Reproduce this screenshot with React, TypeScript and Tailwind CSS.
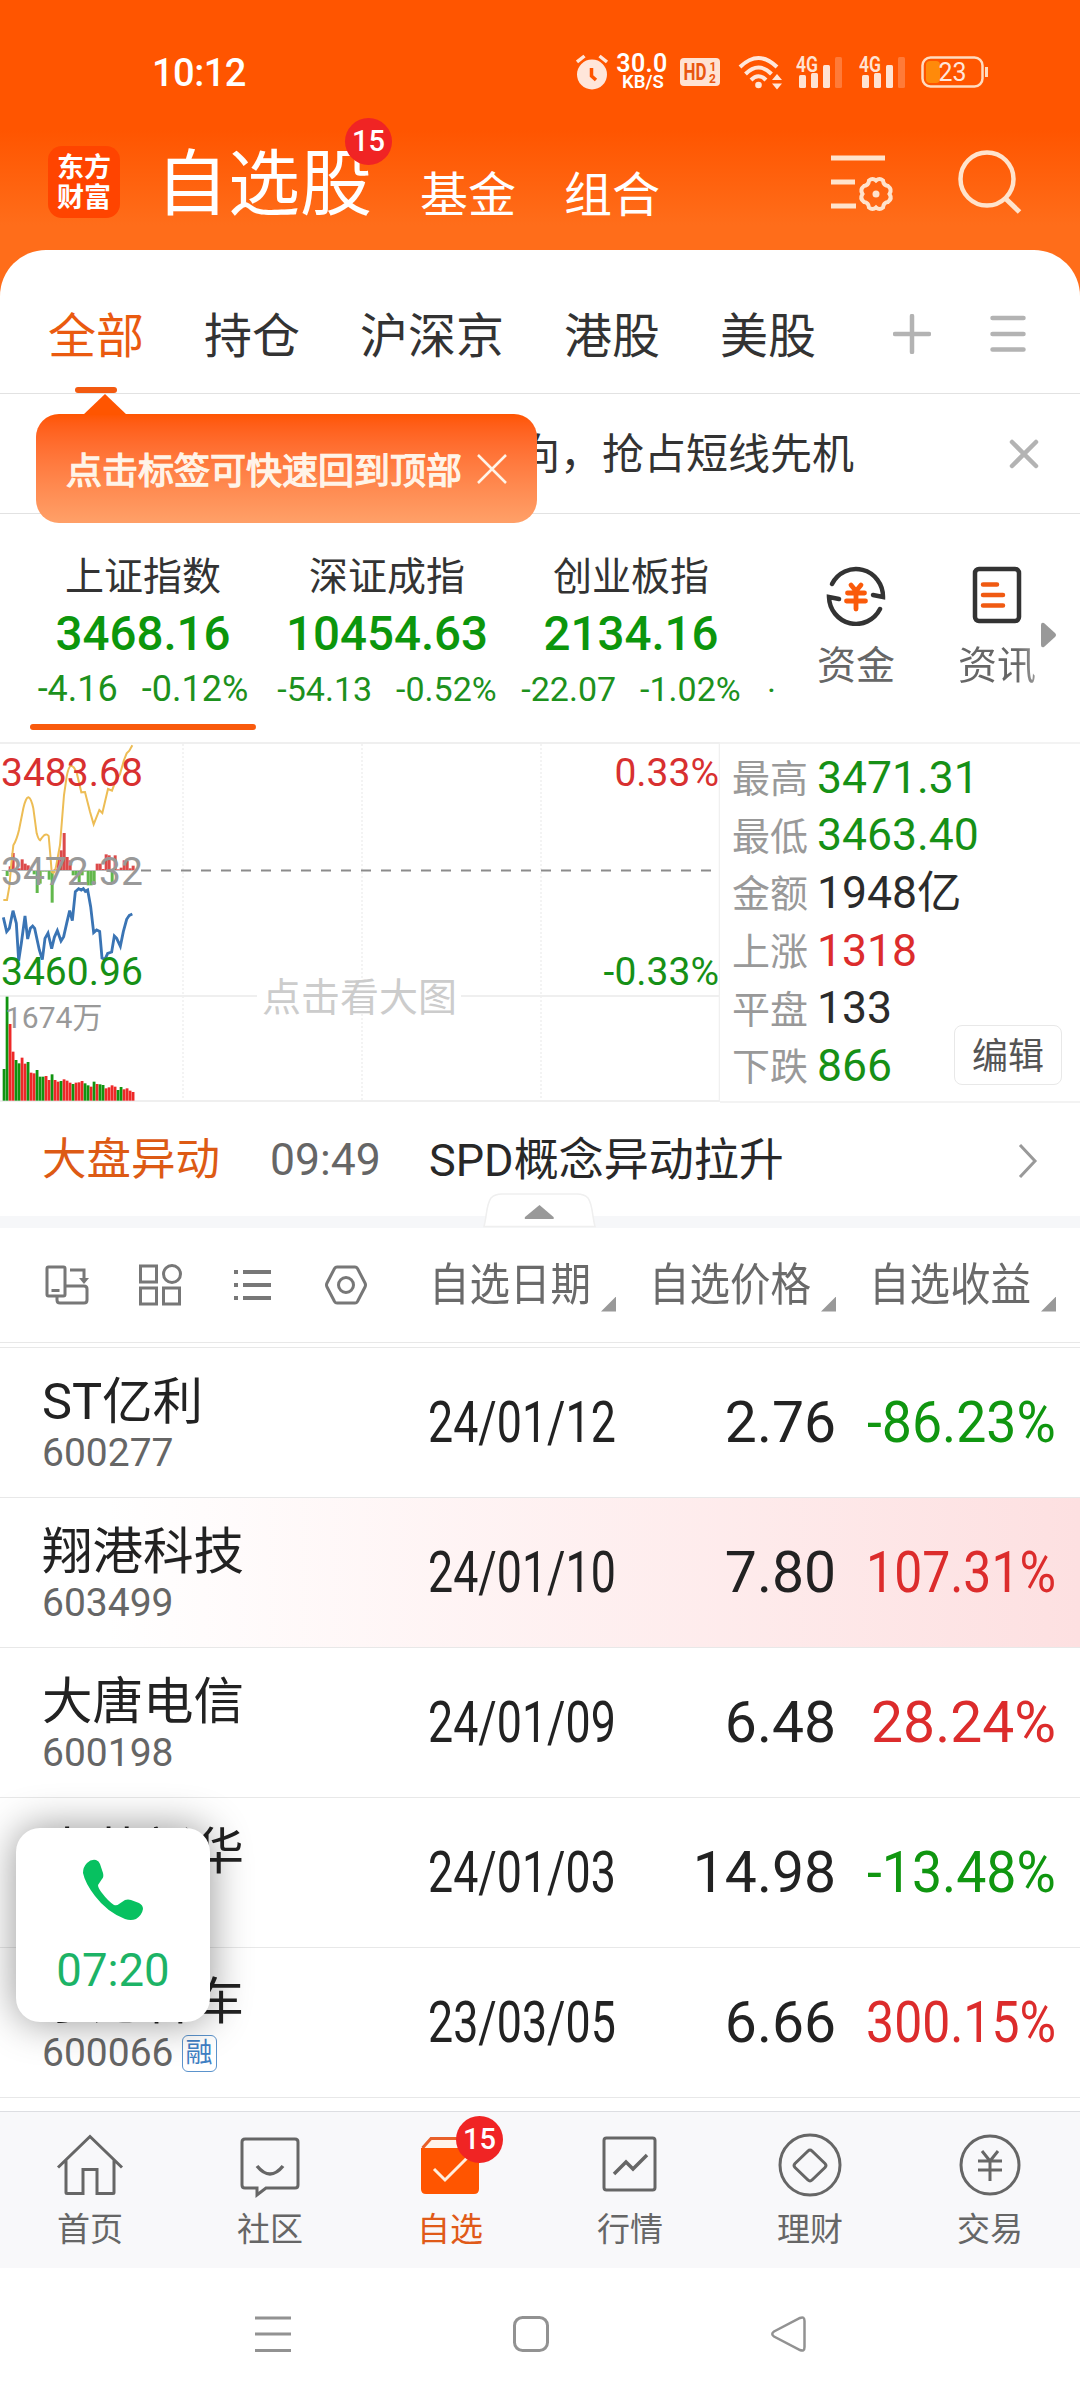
import React from "react";

const CN = "font-[Roboto,'Noto_Sans_CJK_SC',sans-serif]";

function Badge({ className }: { className: string }) {
  return (
    <span
      className={`absolute flex h-[47px] w-[47px] items-center justify-center rounded-full bg-[#f02424] text-[29px] leading-none font-medium text-white ${className}`}
    >
      15
    </span>
  );
}

function Signal() {
  return (
    <svg width="47" height="34" viewBox="0 0 47 34" className="overflow-visible">
      <text x="0" y="16.500" fontSize="22" fontWeight="600" fill="#ffe3d3" textLength="22" lengthAdjust="spacingAndGlyphs">
        4G
      </text>
      <g fill="#ffe3d3">
        <rect x="3" y="20" width="7" height="13" rx="1.500" />
        <rect x="15" y="18" width="7" height="15" rx="1.500" />
        <rect x="27" y="10" width="7" height="23" rx="1.500" />
      </g>
      <rect x="39" y="2" width="7" height="31" rx="1.500" fill="#ff7a38" />
    </svg>
  );
}

function StatusBar() {
  return (
    <div className="flex h-[144px] items-center pl-[152px]">
      <span className="relative top-[1px] w-[424px] text-[38px] leading-none font-medium tracking-[-0.5px] text-white">10:12</span>
      <svg width="33" height="36" viewBox="0 0 33 36">
        <circle cx="16" cy="20.500" r="15" fill="#ffe6da" />
        <path d="M1 8l7.500-6M31 8l-7.500-6" stroke="#ffe6da" strokeWidth="3.500" />
        <path d="M15.500 14v8l4.500 4" stroke="#ff5500" strokeWidth="3.500" fill="none" />
      </svg>
      <div className="ml-[7px] flex w-[52px] flex-col items-center text-white">
        <span className="text-[25px] leading-[19px] font-semibold tracking-[0.4px]">30.0</span>
        <span className="pl-[2px] text-[18.500px] leading-[18px] font-semibold">KB/S</span>
      </div>
      <svg className="ml-[12px]" width="40" height="30" viewBox="0 0 40 30">
        <rect y="1" width="40" height="28" rx="4" fill="#ffe3d3" />
        <g fill="#e8560f" fontWeight="700">
          <text x="3.500" y="23" fontSize="23" textLength="23" lengthAdjust="spacingAndGlyphs">
            HD
          </text>
          <text x="29.500" y="14" fontSize="12">
            1
          </text>
          <text x="29" y="26" fontSize="12">
            2
          </text>
        </g>
      </svg>
      <svg className="ml-[18px]" width="46" height="36" viewBox="0 0 46 36">
        <g fill="none" stroke="#ffe6da" strokeWidth="4">
          <path d="M2 13Q20.500 -5 39 13" />
          <path d="M7.500 20Q20.500 7 33.500 20" />
          <path d="M13 26Q20.500 18.500 28 26" />
        </g>
        <circle cx="20.500" cy="31" r="3.300" fill="#ffe6da" />
        <path d="M34 26h10l-5-6zM34 29.500h10l-5 6z" fill="#ffe6da" />
      </svg>
      <div className="ml-[12px] flex gap-[16px]">
        <Signal />
        <Signal />
      </div>
      <svg className="ml-[15px]" width="68" height="34" viewBox="0 0 68 34">
        <rect x="1.500" y="2.500" width="60" height="29" rx="8" fill="none" stroke="#ffdcc0" strokeWidth="2.500" />
        <rect x="5" y="6" width="14" height="22" rx="4" fill="#ff8a0a" />
        <path d="M65.500 12v10" stroke="#ffdcc0" strokeWidth="3" />
        <text x="17.500" y="26" fontSize="25" fill="#ffe6da" textLength="28" lengthAdjust="spacingAndGlyphs">
          23
        </text>
      </svg>
    </div>
  );
}

function TitleBar() {
  return (
    <div className="flex h-[106px] items-start text-white">
      <div className="mt-[2px] ml-[48px] flex h-[72px] w-[72px] flex-col items-center justify-center rounded-[14px] bg-[#ff4400] pt-[1px] text-[27px] leading-[30px] font-bold">
        <span>东方</span>
        <span>财富</span>
      </div>
      <div className="relative ml-[36px] w-[216px] text-[72px] leading-[72px]">
        <span className="relative top-[5px]">自选股</span>
        <Badge className="-top-[26px] left-[189px]" />
      </div>
      <span className="mt-[28px] ml-[48px] text-[48px] leading-[48px]">基金</span>
      <span className="mt-[28px] ml-[48px] text-[48px] leading-[48px]">组合</span>
      <svg className="mt-[3px] ml-[171px] overflow-visible" width="64" height="62" viewBox="0 0 64 62" fill="none" stroke="#ffe3cc" strokeWidth="5">
        <path d="M0 11h54M0 35h24M0 59h25" />
        <path
          d="M38 34.500Q41.500 31.500 45 34.500Q48.500 31.500 52 34.500Q52.500 39.500 57 40Q61.500 43.500 58.500 48Q61.500 52.500 57 56Q52.500 56.500 52 61.500Q48.500 64.500 45 61.500Q41.500 64.500 38 61.500Q37.500 56.500 33 56Q28.500 52.500 31.500 48Q28.500 43.500 33 40Q37.500 39.500 38 34.500z"
          transform="translate(0,-1)"
          strokeWidth="4"
        />
        <circle cx="45" cy="47" r="3.500" fill="#ffe3cc" stroke="none" />
      </svg>
      <svg className="mt-[5px] ml-[63px]" width="64" height="66" viewBox="0 0 64 66" fill="none" stroke="#ffe3cc" strokeWidth="4.500">
        <circle cx="29" cy="30" r="26.500" />
        <path d="M47.500 49.500l14 13.500" strokeWidth="5" />
      </svg>
    </div>
  );
}

function Tabs() {
  return (
    <div className="flex h-[144px] items-start border-b border-[#e2e2e2] pl-[48px] text-[48px] leading-[48px] text-[#333]">
      <div className="flex gap-[60px] pt-[63px]">
        <div className="flex flex-col items-center text-[#ea5a10]">
          <span>全部</span>
          <span className="mt-[26px] h-[6px] w-[42px] rounded-full bg-[#f35a10]" />
        </div>
        <span>持仓</span>
        <span>沪深京</span>
        <span>港股</span>
        <span>美股</span>
      </div>
      <svg className="mt-[64px] ml-[77px]" width="38" height="40" viewBox="0 0 38 40" stroke="#b3b3b3" strokeWidth="4.500" strokeLinecap="round">
        <path d="M2 20h34M19 2v36" />
      </svg>
      <svg className="mt-[64px] ml-[59px]" width="36" height="40" viewBox="0 0 36 40" stroke="#b3b3b3" strokeWidth="4.500" strokeLinecap="round">
        <path d="M2.500 4h31M2.500 20h31M2.500 35.500h31" />
      </svg>
    </div>
  );
}

function Notice() {
  return (
    <div className="relative flex h-[120px] items-center border-b border-[#e2e2e2] pl-[518px] text-[42px] leading-none text-[#333]">
      <span className="relative top-[1px]">向，抢占短线先机</span>
      <svg className="ml-[155px]" width="30" height="30" viewBox="0 0 30 30" stroke="#b3b3b3" strokeWidth="4.500" strokeLinecap="round">
        <path d="M3 3l24 24M27 3l-24 24" />
      </svg>
      <div className="absolute top-0 left-[36px] z-10">
        <div className="ml-[47px] h-[21px] w-[44px] bg-[#ff5500] [clip-path:polygon(50%_0,100%_100%,0_100%)]" />
        <div className="-mt-px flex h-[109px] w-[501px] items-center rounded-[23px] bg-linear-to-b from-[#ff5500] to-[#ffa068] pl-[30px] text-[36px] text-[#fff4e8]">
          <span className="relative top-[3px] [-webkit-text-stroke:1.3px_#fff4e8]">点击标签可快速回到顶部</span>
          <svg className="ml-[15px]" width="30" height="30" viewBox="0 0 30 30" stroke="#fff4e8" strokeWidth="2.500">
            <path d="M1 1l28 28M29 1l-28 28" />
          </svg>
        </div>
      </div>
    </div>
  );
}

const INDICES = [
  { name: "上证指数", value: "3468.16", diff: "-4.16", pct: "-0.12%", size: "text-[36px]" },
  { name: "深证成指", value: "10454.63", diff: "-54.13", pct: "-0.52%", size: "text-[34px]" },
  { name: "创业板指", value: "2134.16", diff: "-22.07", pct: "-1.02%", size: "text-[34px]" },
];

function Indices() {
  return (
    <div className="flex h-[228px]">
      <div className="flex w-[776px] shrink-0 pl-[21px]">
        {INDICES.map((it, i) => (
          <div key={it.name} className="flex w-[244px] shrink-0 flex-col items-center pt-[43px]">
            <span className="text-[39px] leading-[40px] text-[#333]">{it.name}</span>
            <span className="mt-[9px] text-[47.500px] leading-[56px] font-medium text-[#0c960c]">{it.value}</span>
            <span className={`mt-[7px] flex gap-[24px] leading-[40px] whitespace-nowrap text-[#1d911d] ${it.size}`}>
              <span>{it.diff}</span>
              <span>{it.pct}</span>
            </span>
            {i === 0 && <span className="mt-[15px] h-[6px] w-[226px] rounded-full bg-[#f95a0d]" />}
          </div>
        ))}
        <span className="mt-[156px] ml-[14px] w-[9px] text-[34px] leading-[40px] text-[#1d911d]">·</span>
      </div>
      <div className="flex pt-[50px] text-[39px] leading-[40px] text-[#666]">
        <div className="ml-[41px] flex w-[78px] flex-col items-center">
          <svg width="60" height="62" viewBox="0 0 60 62" fill="none">
            <g stroke="#333" strokeWidth="4.500" strokeLinecap="round">
              <path d="M6 20A27 27.500 0 0 1 57 33L47 31" />
              <path d="M54 45A27 27.500 0 0 1 3 33L13 35" />
            </g>
            <path d="M25 21l5 6 5-6M30 28v17M21.500 29h17M20.500 37h19" stroke="#fa5a0a" strokeWidth="4.800" strokeLinecap="round" />
          </svg>
          <span className="mt-[20px] whitespace-nowrap">资金</span>
        </div>
        <div className="ml-[63px] flex w-[78px] flex-col items-center">
          <svg width="50" height="62" viewBox="0 0 50 62" fill="none">
            <rect x="3" y="5" width="44" height="52" rx="4" stroke="#333" strokeWidth="4.500" />
            <path d="M11 20.500h14M11 31h20M11 41.500h20" stroke="#f05a12" strokeWidth="4.500" strokeLinecap="round" />
          </svg>
          <span className="mt-[20px] bg-linear-to-r from-[#666] from-75% to-[#999] bg-clip-text whitespace-nowrap text-transparent">资讯</span>
        </div>
        <svg className="mt-[58px] ml-[5px]" width="16" height="26" viewBox="0 0 16 26">
          <path d="M0 3Q0 0 3 1L14 11Q16 13 14 15L3 25Q0 26 0 23z" fill="#999" />
        </svg>
      </div>
    </div>
  );
}

/* Volume bars: direction and height in chart units */
const VOLUME: [string, number][] = [
  ["g", 95], ["g", 312], ["r", 230], ["r", 147], ["g", 122], ["g", 112], ["r", 129], ["r", 111], ["g", 116], ["r", 84],
  ["r", 82], ["g", 92], ["g", 72], ["g", 72], ["r", 74], ["r", 62], ["g", 79], ["r", 62], ["r", 57], ["g", 59],
  ["r", 64], ["r", 60], ["r", 54], ["g", 50], ["r", 54], ["r", 55], ["r", 59], ["g", 52], ["g", 46], ["r", 42],
  ["g", 57], ["r", 50], ["g", 49], ["g", 47], ["r", 37], ["r", 40], ["r", 46], ["r", 42], ["g", 32], ["g", 41],
  ["r", 34], ["r", 37], ["r", 30], ["r", 26],
];

/* Momentum around the previous close */
const MOMENTUM = [
  0, -17, 12, 52, 5, 6, 33, 20, 15, 3, -12, -68, -40, -4, -4, -28, -97, 4, 40, 60, 112, 40, 30, -15, -15, -36, -15, -4,
  -45, -45, -42, 20, 20, 4, 48, 45, -35, 45, 3, 8, 30, 28, 6, 14,
];

const YELLOW =
  "M10 510L21 510L28 470L34 400L40 346Q50 330 57 300L70 235Q78 200 86 202Q94 206 100 235L110 310Q116 330 120 331Q126 322 132 316Q140 310 146 318L151 375L155 425Q163 436 168 410L180 345L186 270L192 195L200 140Q206 108 213 107Q222 108 230 128L244 187L255 186L270 245L281 283L298 240L307 249L324 177L336 182L344 160L360 132L372 90L380 70L388 62L397 46";
const BLUE =
  "M10 562L20 605L28 595L39 542L49 580L56 692L64 640L75 558L83 627L91 595L98 588L104 595L118 660L127 689L135 625L144 609L155 656L163 622L172 602L183 633L191 620L200 580L209 542L217 572L226 485L236 476L244 480L250 476L256 484L263 480L272 530L281 608L290 600L299 604L306 684L315 688L323 670L335 666L343 618L350 625L361 649L370 605L380 568L388 556L397 552";

function Chart() {
  return (
    <svg width="720" height="361" viewBox="0 0 720 361" className="shrink-0">
      <path d="M0 1h720M0 254h257M461 254h259M0 359h720" stroke="#efefef" strokeWidth="2" />
      <path d="M719.500 0v360" stroke="#f0f0f0" strokeWidth="1.500" />
      <path d="M183 2v357M362 2v236M362 272v87M541 2v357" stroke="#f0f0f0" strokeWidth="1.500" strokeDasharray="2 2" />
      <path d="M141 128.500h575" stroke="#8c8c8c" strokeWidth="2" strokeDasharray="10 10" />
      <g transform="translate(0,-12) scale(0.33333)">
        {MOMENTUM.map((v, i) => (
          <rect key={i} x={8 + i * 9} y={v > 0 ? 421 - v : 421} width="9" height={Math.abs(v)} fill={v > 0 ? "#dc4a4a" : "#62b84c"} />
        ))}
        {VOLUME.map(([d, h], i) => (
          <rect key={i} x={8 + i * 9} y={1112 - h} width="8.400" height={h} fill={d === "r" ? "#ee2828" : "#109410"} />
        ))}
        <path d={YELLOW} fill="none" stroke="#edbd55" strokeWidth="6" />
        <path d={BLUE} fill="none" stroke="#3a74b4" strokeWidth="8.500" />
        <path d="M5 421.500h395" stroke="#bbb" strokeWidth="3" />
      </g>
      <g fontSize="39">
        <text x="1" y="44" fill="#d83030">3483.68</text>
        <text x="1" y="143" fill="#999">3472.32</text>
        <text x="1" y="243" fill="#169016">3460.96</text>
        <text x="719" y="44" fill="#d83030" textAnchor="end">0.33%</text>
        <text x="719" y="243" fill="#169016" textAnchor="end">-0.33%</text>
        <text x="262" y="269" fill="#ccc">点击看大图</text>
        <text x="5" y="286" fontSize="30" fill="#999">1674万</text>
      </g>
    </svg>
  );
}

const STATS = [
  ["最高", "3471.31", "text-[#169016]"],
  ["最低", "3463.40", "text-[#169016]"],
  ["金额", "1948亿", "text-[#2b2b2b]"],
  ["上涨", "1318", "text-[#dc2c2c]"],
  ["平盘", "133", "text-[#2b2b2b]"],
  ["下跌", "866", "text-[#169016]"],
];

function Market() {
  return (
    <div className="flex h-[361px]">
      <Chart />
      <div className="relative flex-1 border-y-2 border-[#f3f3f3] pt-[5px] pl-[12px]">
        {STATS.map(([k, v, c]) => (
          <div key={k} className="flex h-[57.7px] items-center">
            <span className="relative top-[1px] w-[85px] text-[38px] leading-none text-[#999]">{k}</span>
            <span className={`text-[44.500px] leading-none ${c}`}>{v}</span>
          </div>
        ))}
        <button className="absolute right-[18px] bottom-[16px] flex h-[60px] w-[108px] items-center justify-center rounded-[8px] border border-[#e8e8e8] bg-white pt-[3px] text-[36px] leading-none text-[#555]">
          编辑
        </button>
      </div>
    </div>
  );
}

function Alert() {
  return (
    <div className="relative flex h-[125px] items-center border-b-[12px] border-[#f6f7f9] pt-[2px] pl-[42px] text-[44.500px] leading-none">
      <span className="w-[228px] text-[#dd5a14]">大盘异动</span>
      <span className="w-[159px] text-[#666]">09:49</span>
      <span className="w-[589px] text-[45px] text-[#282828]">SPD概念异动拉升</span>
      <svg width="20" height="34" viewBox="0 0 20 34" fill="none" stroke="#999" strokeWidth="3">
        <path d="M2 1l15 16-15 16" />
      </svg>
      <svg className="absolute -bottom-[12px] left-[482px]" width="115" height="36" viewBox="0 0 115 36">
        <path d="M2 34.500C5 24 4 13 9 6Q13 2 20 2H95Q102 2 106 6C111 13 110 24 113 34.500z" fill="#fff" stroke="#efefef" strokeWidth="1.500" />
        <path d="M57.500 13l14 12q1 2-1 2H44q-2 0-1-2z" fill="#999" />
      </svg>
    </div>
  );
}

function SortHeader({ children }: { children: string }) {
  return (
    <div className="relative w-[220px] shrink-0 text-[45px] leading-none text-[#6a6a6a]">
      <span className="inline-block origin-left scale-x-[0.9] whitespace-nowrap">{children}</span>
      <span className="absolute top-[34px] left-[172px] h-[15px] w-[15px] bg-[#999] [clip-path:polygon(100%_0,100%_100%,0_100%)]" />
    </div>
  );
}

function TableHead() {
  return (
    <div className="flex h-[115px] items-center overflow-hidden border-b border-[#e8e8e8] pl-[45px]">
      <div className="flex w-[384px] shrink-0 items-center">
        <svg width="44" height="42" viewBox="0 0 44 42" fill="none" stroke="#777" strokeWidth="3">
          <rect x="2" y="3" width="18" height="29" rx="1.500" />
          <path d="M6.500 26.500h8M12 32v4q0 3 3 3h24q3 0 3-3V25q0-3-3-3H20M25 6h14v10" />
          <path d="M34 14h10l-5 6z" fill="#777" stroke="none" />
        </svg>
        <svg className="ml-[49px]" width="44" height="42" viewBox="0 0 44 42" fill="none" stroke="#777" strokeWidth="3">
          <rect x="2.500" y="2" width="16" height="16" />
          <circle cx="34" cy="10" r="8.500" />
          <rect x="2.500" y="24" width="16" height="16" />
          <rect x="25.500" y="24" width="16" height="16" />
        </svg>
        <svg className="ml-[51px]" width="40" height="42" viewBox="0 0 40 42" stroke="#777" strokeWidth="4.200">
          <path d="M1 8h4M1 21h4M1 34h4M10 8h28M10 21h28M10 34h28" />
        </svg>
        <svg className="ml-[51px]" width="44" height="42" viewBox="0 0 44 42" fill="none" stroke="#777" strokeWidth="3">
          <path d="M13 3h18q1.500 0 2.500 1.500L41 19q1 2 0 4l-7.500 14.500q-1 1.500-2.500 1.500H13q-1.500 0-2.500-1.500L3 23q-1-2 0-4l7.500-14.500Q11.500 3 13 3z" />
          <circle cx="22" cy="21" r="7.500" />
        </svg>
      </div>
      <SortHeader>自选日期</SortHeader>
      <SortHeader>自选价格</SortHeader>
      <SortHeader>自选收益</SortHeader>
    </div>
  );
}

const UP = "text-[#dc2c2c]";
const DOWN = "text-[#109610]";
const ROWS = [
  { name: "ST亿利", code: "600277", date: "24/01/12", price: "2.76", pct: "-86.23%", cls: `${DOWN} scale-x-[0.94]` },
  { name: "翔港科技", code: "603499", date: "24/01/10", price: "7.80", pct: "107.31%", cls: `${UP} scale-x-[0.875]`, hot: true },
  { name: "大唐电信", code: "600198", date: "24/01/09", price: "6.48", pct: "28.24%", cls: `${UP}` },
  { name: "中英新华", code: "", date: "24/01/03", price: "14.98", pct: "-13.48%", cls: `${DOWN} scale-x-[0.94]` },
  { name: "宇通客车", code: "600066", date: "23/03/05", price: "6.66", pct: "300.15%", cls: `${UP} scale-x-[0.875]`, tag: "融" },
];

function Stocks() {
  return (
    <div className="h-[768px] pt-[4px]">
      <div className="h-px bg-[#e8e8e8]" />
      {ROWS.map((r) => (
        <div
          key={r.name}
          className={`grid h-[150px] grid-cols-[428px_188px_220px_220px] items-center border-b border-[#e8e8e8] text-[57px] leading-none text-[#222] ${
            r.hot ? "bg-linear-to-r from-white from-10% to-[#fde0e1]" : ""
          }`}
        >
          <div className="pt-[3px] pl-[42px]">
            <div className="text-[50.500px] leading-[58px]">{r.name}</div>
            <div className="flex h-[44px] items-center text-[39px] leading-[44px] text-[#666]">
              {r.code}
              {r.tag && (
                <span className="ml-[8px] flex h-[37px] w-[35px] items-center justify-center rounded-[6px] border-[1.5px] border-[#5b93cc] text-[27px] leading-none text-[#3f80c4]">
                  {r.tag}
                </span>
              )}
            </div>
          </div>
          <span className="origin-left scale-x-[0.785] whitespace-nowrap">{r.date}</span>
          <span className="text-right">{r.price}</span>
          <span className={`origin-right justify-self-end whitespace-nowrap ${r.cls}`}>{r.pct}</span>
        </div>
      ))}
    </div>
  );
}

function CallBubble() {
  return (
    <div className="absolute top-[1828px] left-[16px] z-20 flex h-[194px] w-[194px] flex-col items-center rounded-[24px] bg-white pt-[31px] shadow-[0_0_40px_rgba(0,0,0,0.42)]">
      <svg width="62" height="62" viewBox="0 0 62 62">
        <path
          d="M5 4Q9 0 14 1Q17 2 18 5L21 14Q22 18 20 20L16 26Q16 29 20 34Q26 42 32 46Q35 47 37 45L43 41Q46 40 49 41L57 44Q61 46 61 50Q60 56 54 60Q49 62 43 60Q25 53 13 37Q3 24 1 14Q1 8 5 4z"
          fill="#07c160"
        />
      </svg>
      <span className="mt-[28px] text-[45.500px] leading-[44px] text-[#1cb366]">07:20</span>
    </div>
  );
}

const G = { fill: "none", stroke: "#666", strokeWidth: 3 };
const NAV = [
  {
    label: "首页",
    icon: (
      <g {...G}>
        <path d="M2 35L34 4l32 31M10 28v32q0 1 1 1h16V37h14v24h16q1 0 1-1V28" transform="translate(0,.5)" />
      </g>
    ),
  },
  {
    label: "社区",
    icon: (
      <g {...G}>
        <path d="M9 7h50q3 0 3 3v43q0 3-3 3H30l-9 7v-7H9q-3 0-3-3V10q0-3 3-3z" />
        <path d="M21 34q13 16 26 0" strokeWidth="3.500" />
      </g>
    ),
  },
  {
    label: "自选",
    active: true,
    icon: (
      <g>
        <path d="M6.500 16L15 6.500H61V16" fill="#fff4ea" stroke="#e8602a" strokeWidth="3" />
        <path d="M5 16H63V57q0 5-5 5H10q-5 0-5-5z" fill="#ff5500" />
        <path d="M18 37l11 11 22-22" fill="none" stroke="#ffeedd" strokeWidth="3" />
      </g>
    ),
  },
  {
    label: "行情",
    icon: (
      <g {...G}>
        <rect x="8" y="6" width="51" height="52" rx="2.500" />
        <path d="M18 42l12-12 7 7 14-14" strokeWidth="3.500" />
      </g>
    ),
  },
  {
    label: "理财",
    icon: (
      <g {...G}>
        <circle cx="34" cy="33" r="30" />
        <path d="M32 19q2-2 4 0l13 12.500q2 2 0 4L36 48q-2 2-4 0L19 35.500q-2-2 0-4z" />
      </g>
    ),
  },
  {
    label: "交易",
    icon: (
      <g {...G}>
        <circle cx="34" cy="33" r="29" />
        <path d="M26 19l8 10 8-10M34 29v20M22 29h24M22 38h24" />
      </g>
    ),
  },
];

function BottomNav() {
  return (
    <div className="flex h-[157px] border-t border-[#dddee2] bg-[#f8f8fa]">
      {NAV.map((n) => (
        <div key={n.label} className="relative flex w-[180px] flex-col items-center pt-[20px]">
          <svg width="68" height="68" viewBox="0 0 68 68">
            {n.icon}
          </svg>
          <span className={`mt-[12px] text-[33px] leading-[36px] ${n.active ? "text-[#e05a18]" : "text-[#666]"}`}>{n.label}</span>
          {n.active && <Badge className="top-[4px] left-[96px]" />}
        </div>
      ))}
    </div>
  );
}

function SystemNav() {
  return (
    <div className="flex h-[132px] items-center justify-center gap-[222px] pr-[19px]">
      <svg width="36" height="38" viewBox="0 0 36 38" stroke="#929292" strokeWidth="3">
        <path d="M0 3h36M0 19h36M0 35.500h36" />
      </svg>
      <svg width="36" height="38" viewBox="0 0 36 38" fill="none" stroke="#929292" strokeWidth="3">
        <rect x="1.500" y="2.500" width="33" height="33" rx="8" />
      </svg>
      <svg width="36" height="38" viewBox="0 0 36 38" fill="none" stroke="#929292" strokeWidth="2.500">
        <path d="M29 3Q33.500 1 33.500 6V32Q33.500 37 29 35L3 21.500Q-.5 19 3 16.500z" />
      </svg>
    </div>
  );
}

export default function App() {
  return (
    <div className={`relative h-[2400px] w-[1080px] overflow-hidden bg-white ${CN}`}>
      <div className="bg-[linear-gradient(to_bottom,#ff5500_0px,#ff5500_130px,#ff6d1a_225px,#ff6d1a_250px)]">
        <StatusBar />
        <TitleBar />
        <div className="rounded-t-[46px] bg-white">
          <Tabs />
        </div>
      </div>
      <Notice />
      <Indices />
      <Market />
      <Alert />
      <TableHead />
      <Stocks />
      <BottomNav />
      <SystemNav />
      <CallBubble />
    </div>
  );
}
